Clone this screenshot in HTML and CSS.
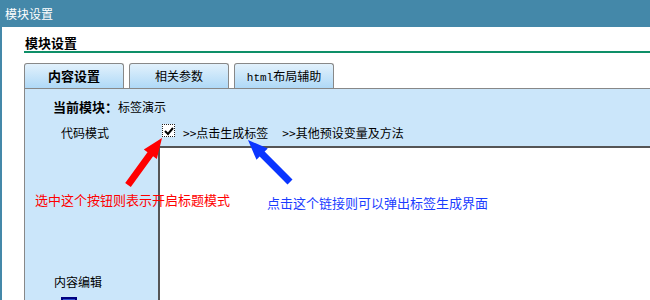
FILE: index.html
```html
<!DOCTYPE html>
<html lang="zh-CN">
<head>
    <meta charset="UTF-8">
    <title>模块设置</title>
    <link rel="stylesheet" href="styles.css">
</head>
<body>
    <div class="titlebar">模块设置</div>
    <div class="page">
        <h2 class="heading">模块设置</h2>
        <ul class="tabs">
            <li class="tab active">内容设置</li>
            <li class="tab">相关参数</li>
            <li class="tab"><span class="mono">html</span>布局辅助</li>
        </ul>
        <div class="panel">
            <div class="current"><b>当前模块：</b>标签演示</div>
            <div class="row">
                <div class="label mode-label">代码模式</div>
                <div class="field">
                    <span class="check">
                        <svg width="10" height="10" viewBox="0 0 10 10"><path d="M1 5 L4 8 L9 2" fill="none" stroke="#000" stroke-width="2"/></svg>
                    </span>
                    <a class="link">&gt;&gt;点击生成标签</a>
                    <a class="link">&gt;&gt;其他预设变量及方法</a>
                </div>
            </div>
            <div class="row">
                <div class="label edit-label">
                    内容编辑
                    <span class="check2"></span>
                </div>
                <div class="editor"></div>
            </div>
        </div>
    </div>

    <!-- annotations drawn over the form -->
    <svg class="arrows" width="650" height="300">
        <polygon fill="#ff0000" points="162,138 156.8,158.9 153.1,156.3 130.8,187.1 125.2,183 147.5,152.2 143.8,149.5"/>
        <polygon fill="#0a35ff" points="248,140 267.8,148.4 264.6,151.6 292.5,179.5 287.5,184.5 259.6,156.6 256.5,159.8"/>
    </svg>
    <div class="note note-red">选中这个按钮则表示开启标题模式</div>
    <div class="note note-blue">点击这个链接则可以弹出标签生成界面</div>
</body>
</html>
```

FILE: styles.css
```css
body {
    margin: 0;
    overflow: hidden;
    height: 300px;
    font-family: "Noto Sans CJK SC", "Liberation Sans", sans-serif;
    font-size: 12px;
    color: #000;
    background-color: #fff;
}

.titlebar {
    height: 27px;
    line-height: 27px;
    padding-left: 5px;
    color: #fff;
    background-color: #4488a9;
}

.page {
    border-left: 2px solid #4488a9;
    padding-left: 22px;
    height: 273px;
    overflow: hidden;
}

.heading {
    margin: 8px 0 0 0;
    padding-left: 1px;
    font-size: 13px;
    line-height: 16px;
    border-bottom: 2px solid #0e8f68;
}

.tabs {
    display: flex;
    gap: 5px;
    list-style: none;
    margin: 10px 0 0 0;
    padding: 0;
}

.tab {
    width: 98px;
    height: 24px;
    line-height: 24px;
    text-align: center;
    border: 1px solid #888;
    border-bottom: none;
    border-radius: 3px 3px 0 0;
    background: linear-gradient(#e2f1fc, #afd9f7);
}

.tab.active {
    font-weight: bold;
    font-size: 13px;
}

.mono {
    font-family: "Liberation Mono", monospace;
    font-size: 11px;
}

/* content panel */
.panel {
    height: 211px;
    border-top: 1px solid #888;
    border-left: 1px solid #888;
    background-color: #cbe6fa;
    overflow: hidden;
}

.current {
    padding: 10px 0 10px 28px;
    line-height: 16px;
}

.current b {
    font-size: 13px;
}

.row {
    display: flex;
}

.label {
    width: 133px;
    flex-shrink: 0;
    line-height: 16px;
}

.mode-label {
    padding-left: 36px;
    box-sizing: border-box;
    padding-bottom: 5px;
}

.edit-label {
    padding: 128px 0 0 29px;
    box-sizing: border-box;
}

.field {
    display: flex;
    align-items: center;
    line-height: 16px;
    height: 16px;
}

.check {
    display: flex;
    align-items: center;
    justify-content: center;
    width: 11px;
    height: 11px;
    margin: -5px 8px 0 4px;
    border: 1px dotted #222;
    background-color: #fff;
}

.check2 {
    display: block;
    width: 12px;
    height: 12px;
    margin: 7px 0 0 7px;
    border: 2px solid #000080;
    background-color: #3050d0;
}

.link {
    margin-right: 14px;
    color: #000;
    text-decoration: none;
}

.editor {
    flex: 1;
    height: 152px;
    border-top: 2px solid #555;
    border-left: 2px solid #555;
    background-color: #fff;
}

.arrows {
    position: absolute;
    top: 0;
    left: 0;
}

.note {
    position: absolute;
    font-size: 13px;
    line-height: 16px;
}

.note-red {
    left: 35px;
    top: 192px;
    color: #ff0000;
}

.note-blue {
    left: 267px;
    top: 195px;
    color: #1a3cff;
}
```
